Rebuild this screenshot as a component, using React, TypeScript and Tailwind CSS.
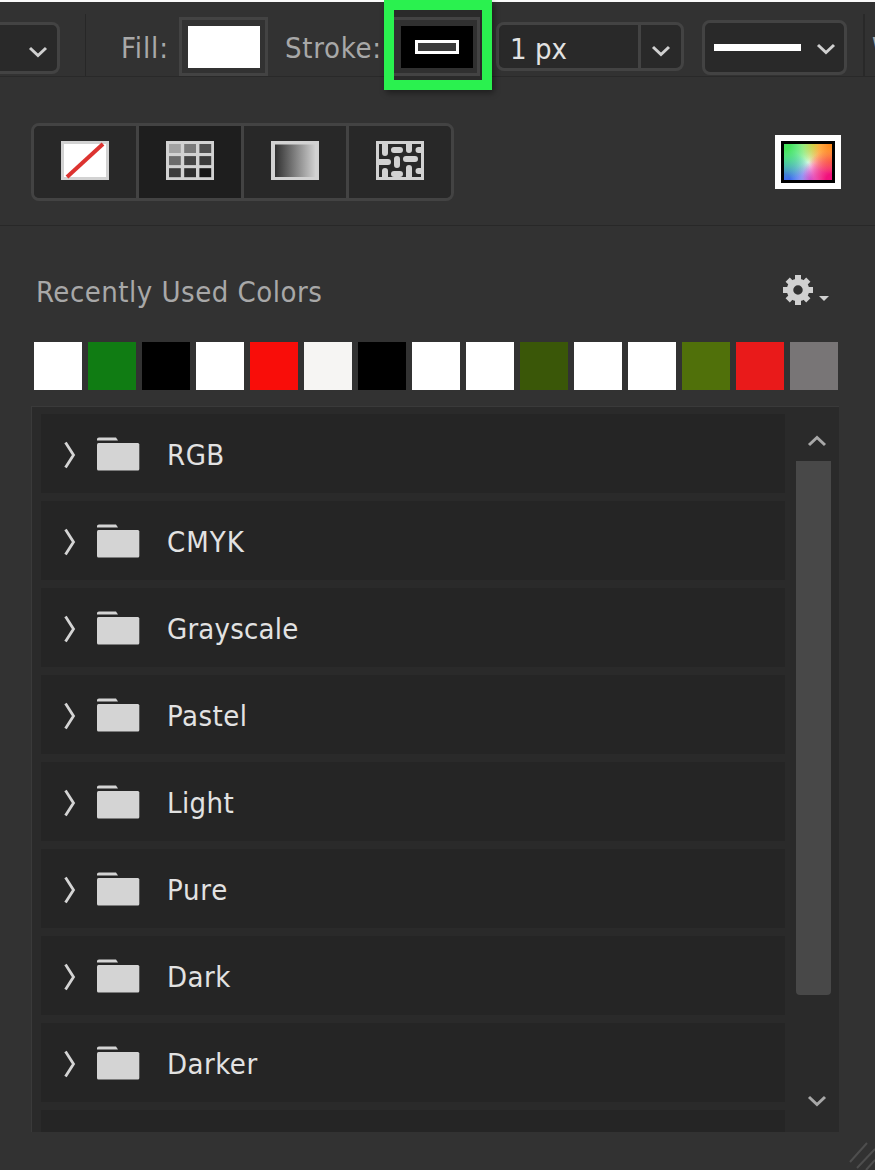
import type { ReactNode } from "react";
import clsx from "clsx";

const recentColors = [
  "bg-white",
  "bg-[#107c13]",
  "bg-black",
  "bg-white",
  "bg-[#f90d09]",
  "bg-[#f6f5f3]",
  "bg-black",
  "bg-white",
  "bg-white",
  "bg-[#3a5708]",
  "bg-white",
  "bg-white",
  "bg-[#50700a]",
  "bg-[#e91a1a]",
  "bg-[#787576]",
];

const folders = [
  { name: "RGB", text: "tracking-[0.5px]" },
  { name: "CMYK", text: "tracking-[1px]" },
  { name: "Grayscale", text: "tracking-[0.2px]" },
  { name: "Pastel", text: "tracking-[0.5px]" },
  { name: "Light", text: "tracking-[0.4px]" },
  { name: "Pure", text: "tracking-[0.8px]" },
  { name: "Dark", text: "tracking-[0.5px]" },
  { name: "Darker", text: "tracking-[0.5px]" },
];

interface ChevronProps {
  className?: string;
  up?: boolean;
}

function Chevron({ className, up }: ChevronProps) {
  return (
    <svg
      viewBox="0 0 20 12"
      className={clsx("h-3 w-5 shrink-0", up && "rotate-180", className)}
      fill="none"
      stroke="currentColor"
      strokeWidth="3"
    >
      <path d="M2 2 L10 9.5 L18 2" />
    </svg>
  );
}

function NoColorIcon() {
  return (
    <svg width="48" height="39" viewBox="0 0 48 39">
      <rect width="48" height="39" fill="#d2d2d2" />
      <rect x="3" y="3" width="42" height="33" fill="#fff" />
      <path d="M6 36 L42 3" stroke="#dc3330" strokeWidth="4" />
    </svg>
  );
}

function SolidIcon() {
  const shades = [
    "#a2a2a2", "#7a7a7a", "#505050",
    "#6c6c6c", "#444444", "#3b3b3b",
    "#3c3c3c", "#2d2d2d", "#171717",
  ];
  return (
    <svg width="48" height="39" viewBox="0 0 48 39">
      <rect width="48" height="39" fill="#d2d2d2" />
      {shades.map((shade, i) => (
        <rect
          key={i}
          x={3 + (i % 3) * 15.2}
          y={3 + Math.floor(i / 3) * 12.1}
          width="11.8"
          height="9"
          fill={shade}
        />
      ))}
    </svg>
  );
}

function GradientIcon() {
  return (
    <svg width="48" height="39" viewBox="0 0 48 39">
      <defs>
        <linearGradient id="ramp">
          <stop offset="0" stopColor="#303030" />
          <stop offset="1" stopColor="#cfcfcf" />
        </linearGradient>
      </defs>
      <rect width="48" height="39" fill="#d2d2d2" />
      <rect x="4" y="3.5" width="40" height="32.5" fill="url(#ramp)" />
    </svg>
  );
}

function PatternIcon() {
  return (
    <svg width="48" height="39" viewBox="0 0 48 39">
      <rect width="48" height="39" fill="#d2d2d2" />
      <rect x="3" y="3" width="42" height="33" fill="#292929" />
      <g stroke="#d2d2d2" strokeWidth="6" strokeLinecap="round">
        <path d="M9 2 V12 M33 2 V9 M18 9 H24 M42.5 9 H46" />
        <path d="M2 21 H12 M21 18 V24 M30 18 H39" />
        <path d="M9 30 V37 M18 33 H24 M33 27 V37 M42.5 30 H46" />
      </g>
    </svg>
  );
}

function SpectrumButton() {
  return (
    <button className="h-[54px] w-[66px] bg-white p-1.5">
      <div className="h-full w-full border-[3px] border-black bg-white bg-[radial-gradient(circle_at_0%_0%,#44e35c_10%,transparent_60%),radial-gradient(circle_at_100%_0%,#ff8a1c_5%,transparent_50%),radial-gradient(circle_at_100%_100%,#f2107c_10%,transparent_50%),radial-gradient(circle_at_0%_100%,#3f6cf0_10%,transparent_50%),radial-gradient(circle_at_62%_0%,#fff04c_0%,transparent_42%),radial-gradient(circle_at_100%_50%,#fb4c58_0%,transparent_45%),radial-gradient(circle_at_55%_100%,#d472f2_0%,transparent_40%),radial-gradient(circle_at_0%_52%,#5cf4ee_0%,transparent_50%)]" />
    </button>
  );
}

function Gear() {
  return (
    <svg width="46" height="32" viewBox="0 0 46 32" fill="#d0d0d0">
      <g stroke="#d0d0d0" strokeWidth="6">
        <path d="M15 1 V7 M15 25 V31 M0 16 H6 M24 16 H30" />
        <path d="M4.7 5.7 L9 10 M21 22 L25.3 26.3 M4.7 26.3 L9 22 M21 10 L25.3 5.7" />
      </g>
      <circle cx="15" cy="16" r="8" fill="none" stroke="#d0d0d0" strokeWidth="6.5" />
      <path d="M36 22 H46 L41 27 Z" />
    </svg>
  );
}

function FolderRow({ name, text }: { name: string; text: string }) {
  return (
    <div className="flex h-[87px] shrink-0 items-center border-b-8 border-[#2a2a2a] bg-[#252525] pl-[22px]">
      <svg width="14" height="28" viewBox="0 0 14 28" fill="none" className="mt-[3px]">
        <path d="M2.5 1.5 L10.5 14 L2.5 26.5" stroke="#d4d4d4" strokeWidth="2.8" />
      </svg>
      <svg width="43" height="34" viewBox="0 0 43 34" fill="#d4d4d4" className="ml-5">
        <path d="M0 3.5 V2 Q0 0.5 2 0.5 H19 L21 3.5 Z" />
        <rect y="6" width="42.3" height="27.5" rx="1.5" />
      </svg>
      <span className={clsx("mt-0.5 ml-[27px] text-[29px] leading-10 text-[#e2e2e2]", text)}>
        {name}
      </span>
    </div>
  );
}

function FillTab({ active, children }: { active?: boolean; children: ReactNode }) {
  return (
    <button
      className={clsx(
        "flex h-full flex-1 items-center justify-center pb-[3px]",
        active ? "bg-[#1e1e1e]" : "bg-[#282828]"
      )}
    >
      {children}
    </button>
  );
}

function Toolbar() {
  return (
    <div className="flex h-[77px] border-t-2 border-b border-t-[#fafafa] border-b-[#292929] text-[29px] leading-[54px] text-[#a8a8a8]">
      <div className="mt-5 flex h-[52px] w-[60px] shrink-0 items-center justify-end rounded-r-lg border-[3px] border-l-0 border-[#434343] bg-[#292929] pt-[7px] pr-[9px] text-[#d0d0d0]">
        <Chevron />
      </div>
      <div className="mt-3 ml-[25px] w-px shrink-0 bg-[#272727]" />
      <div className="mt-[19px] ml-[35px] w-[58px] shrink-0 tracking-[0.9px] whitespace-nowrap">Fill:</div>
      <div className="mt-[15px] h-[59px] w-[89px] shrink-0 border-[3px] border-[#434343] p-1.5">
        <div className="h-[42px] w-[72px] bg-white" />
      </div>
      <div className="mt-[19px] ml-[17px] w-[99px] shrink-0 tracking-[0.7px] whitespace-nowrap">Stroke:</div>
      <div className="z-10 -mt-0.5 h-[90px] w-[108px] shrink-0 border-10 border-[#2af14f] bg-[#2a2a2a] shadow-[2px_3px_6px_rgba(0,0,0,0.4)]">
        <div className="mt-[7px] mr-0.5 h-[59px] border-y-3 border-r-3 border-[#434343] bg-[#303030] pt-1.5 pl-[7px]">
          <div className="flex h-[42px] w-[72px] items-center justify-center bg-black">
            <div className="h-3.5 w-11 border-[3px] border-white bg-[#3b3b3b]" />
          </div>
        </div>
      </div>
      <div className="mt-5 ml-1 flex h-[49px] w-[188px] shrink-0 rounded-lg border-[3px] border-[#434343] bg-[#292929] leading-[49px] text-[#e2e2e2]">
        <span className="w-[139px] pl-[11px]">1 px</span>
        <div className="flex flex-1 items-center justify-center border-l-[3px] border-[#434343] pt-2 text-[#d0d0d0]">
          <Chevron />
        </div>
      </div>
      <div className="mt-[18px] ml-[18px] flex h-[55px] w-[145px] shrink-0 items-center rounded-lg border-[3px] border-[#434343] bg-[#292929] pl-[9px] text-[#d0d0d0]">
        <div className="h-[7px] w-[87px] bg-white" />
        <Chevron className="mt-0.5 ml-[15px]" />
      </div>
      <div className="mt-3 ml-4 w-0.5 shrink-0 bg-[#292929]" />
      <div className="mt-[19px] ml-[7px] w-0 whitespace-nowrap">W:</div>
    </div>
  );
}

function App() {
  return (
    <div className="flex h-[1170px] w-[875px] flex-col overflow-hidden bg-[#323232] font-['DejaVu_Sans_Condensed','DejaVu_Sans',sans-serif] font-stretch-condensed">
      <Toolbar />

      <div className="flex h-[149px] shrink-0 items-start justify-between border-b border-[#282828] pt-[46px] pr-[34px] pl-[31px]">
        <div className="flex h-[78px] w-[423px] divide-x-[3px] divide-[#434343] overflow-hidden rounded-lg border-[3px] border-[#434343]">
          <FillTab>
            <NoColorIcon />
          </FillTab>
          <FillTab active>
            <SolidIcon />
          </FillTab>
          <FillTab>
            <GradientIcon />
          </FillTab>
          <FillTab>
            <PatternIcon />
          </FillTab>
        </div>
        <div className="pt-3">
          <SpectrumButton />
        </div>
      </div>

      <div className="flex h-[116px] shrink-0 items-start justify-between pt-12 pr-[46px] pl-9">
        <h2 className="text-[29px] leading-9 tracking-[0.5px] text-[#a8a8a8]">Recently Used Colors</h2>
        <Gear />
      </div>

      <div className="flex h-12 shrink-0 gap-1.5 pl-[34px]">
        {recentColors.map((color, i) => (
          <div key={i} className={clsx("h-12 w-12", color)} />
        ))}
      </div>

      <div className="mt-4 ml-[31px] flex h-[726px] w-[808px] shrink-0 border-t border-l border-[#3a3a3a] bg-[#2a2a2a]">
        <div className="ml-[9px] flex h-full w-[744px] flex-col overflow-hidden pt-[7px]">
          {folders.map((folder) => (
            <FolderRow key={folder.name} {...folder} />
          ))}
          <div className="flex-1 bg-[#252525]" />
        </div>
        <div className="flex flex-1 flex-col pl-[11px] text-[#a8a8a8]">
          <Chevron up className="mt-7 ml-[11px]" />
          <div className="mt-[14px] h-[534px] w-[35px] rounded-b-sm bg-[#484848]" />
          <Chevron className="mt-[100px] ml-[11px]" />
        </div>
      </div>

      <div className="flex flex-1 items-end justify-end">
        <svg width="26" height="29" viewBox="0 0 26 29" stroke="#4e4e4e" strokeWidth="2">
          <path d="M1 21 L18 2 M8 27 L26 8 M17 29 L26 19" />
        </svg>
      </div>
    </div>
  );
}

export default App;
